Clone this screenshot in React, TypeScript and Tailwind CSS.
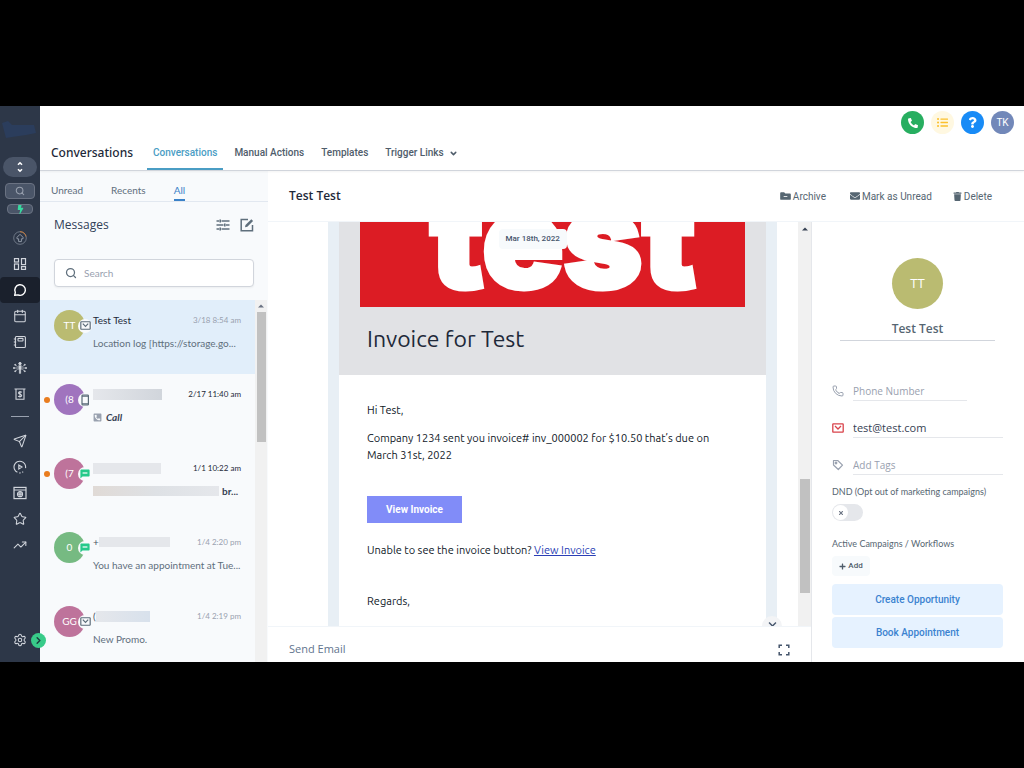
import React, { useState } from "react";
import { ChevronDown, Send, Star, TrendingUp, Settings, Calendar, Search, Phone } from "lucide-react";
import { FaBolt, FaEnvelope, FaListUl, FaPhoneAlt, FaPhoneSquareAlt, FaPlus, FaQuestion, FaTimes, FaTrash, FaChevronDown } from "react-icons/fa";

type IconProps = { className?: string };

const Mail = ({ className = "" }: IconProps) => (
    <svg className={className} viewBox="0 0 12 10" fill="none" stroke="currentColor" strokeWidth="1.3">
        <rect x="0.8" y="0.8" width="10.4" height="8.4" rx="0.5" />
        <path d="M3 3l3 3 3-3" />
    </svg>
);

const PhoneDevice = ({ className = "" }: IconProps) => (
    <svg className={className} viewBox="0 0 12 12" fill="none" stroke="currentColor" strokeWidth="1.2">
        <rect x="3" y="1" width="6.4" height="10" rx="0.8" />
        <path d="M3 2.2h6.4M3 9.8h6.4" />
    </svg>
);

const Sms = ({ className = "" }: IconProps) => (
    <svg className={className} viewBox="0 0 10 10" fill="currentColor">
        <path d="M1.200 0.500h7.600a.8.8 0 0 1 .8.8v5.400a.8.8 0 0 1-.8.8H2.500L0.400 9.500V1.300a.8.8 0 0 1 .8-.8z" />
        <path d="M2.600 4h4.800" stroke="white" strokeWidth="1.200" />
    </svg>
);

const Dashboard = ({ className = "" }: IconProps) => (
    <svg className={className} viewBox="0 0 14 14" fill="none" stroke="currentColor" strokeWidth="1.2">
        <rect x="1.5" y="1.6" width="4" height="3.4" />
        <rect x="1.5" y="7" width="4" height="5.4" />
        <rect x="8.5" y="1.6" width="4" height="6" />
        <rect x="8.5" y="9.6" width="4" height="2.8" />
    </svg>
);

const Chat = ({ className = "" }: IconProps) => (
    <svg className={className} viewBox="0 0 14 14" fill="none" stroke="currentColor" strokeWidth="1.4" strokeLinejoin="round">
        <path d="M1.7 12.3l.6-3A5.3 5.3 0 1 1 5 11.9z" />
    </svg>
);

const Notebook = ({ className = "" }: IconProps) => (
    <svg className={className} viewBox="0 0 14 14" fill="none" stroke="currentColor" strokeWidth="1.1">
        <rect x="2.4" y="1.5" width="10" height="11" rx="1" />
        <rect x="5" y="3.4" width="5" height="2.6" rx="0.6" />
        <path d="M0.8 4h2.4M0.8 7h2.4M0.8 10h2.4" />
    </svg>
);

const Network = ({ className = "" }: IconProps) => (
    <svg className={className} viewBox="0 0 14 14" fill="currentColor" stroke="currentColor">
        <circle cx="7" cy="2.6" r="1.2" />
        <path d="M5.6 4.6h2.8v4h-.6V12.500H6.200V8.600h-.6z" strokeWidth="0.3" />
        <path d="M5 7H1.500M9 7h3.500M4.600 5.600L2.400 4M9.400 5.600L11.600 4M4.600 8.400L2.400 10M9.400 8.400L11.600 10" strokeWidth="0.7" fill="none" />
        <circle cx="1" cy="7" r="0.6" />
        <circle cx="13" cy="7" r="0.6" />
        <circle cx="2.2" cy="3.800" r="0.5" />
        <circle cx="11.800" cy="3.800" r="0.5" />
        <circle cx="2.2" cy="10.200" r="0.5" />
        <circle cx="11.800" cy="10.200" r="0.5" />
    </svg>
);

const Payment = ({ className = "" }: IconProps) => (
    <svg className={className} viewBox="0 0 14 14" fill="none" stroke="currentColor" strokeWidth="1.1">
        <path d="M1.500 2h11M3 2v10.200h8V2" />
        <path d="M8.800 5.400C8.300 4.600 5.500 4.500 5.500 6S8.700 7 8.700 8.500 5.700 10 5.200 9M7 4v6.500" />
    </svg>
);

const Play = ({ className = "" }: IconProps) => (
    <svg className={className} viewBox="0 0 14 14" fill="none" stroke="currentColor" strokeWidth="1.1">
        <path d="M12.500 8.200A5.800 5.800 0 1 0 4.400 12.300" />
        <path d="M6.200 13l1.400-.1M9.200 12.400l1-.6" />
        <path d="M5.800 5v4l3.200-2z" />
    </svg>
);

const Browser = ({ className = "" }: IconProps) => (
    <svg className={className} viewBox="0 0 14 14" fill="none" stroke="currentColor" strokeWidth="1.2">
        <rect x="1" y="1.400" width="12" height="11.200" />
        <path d="M1 4h12M4.500 8.200h5M7 5.700v5" />
        <circle cx="7" cy="8.200" r="2.500" />
    </svg>
);

const Launch = ({ className = "" }: IconProps) => (
    <svg className={className} viewBox="0 0 14 14" fill="none" stroke="currentColor">
        <circle cx="7" cy="7" r="6.300" strokeWidth="0.6" />
        <path d="M7 0.700A6.300 6.300 0 0 1 13 5.500" stroke="#c77b3b" strokeWidth="1" />
        <path d="M7 3.300l3 3v1.500H8.400v2.800H5.600V7.800H4V6.300z" strokeWidth="0.9" />
    </svg>
);

const Sliders = ({ className = "" }: IconProps) => (
    <svg className={className} viewBox="0 0 14 12" fill="none" stroke="currentColor" strokeWidth="1.5">
        <path d="M0.500 2H3M5.500 2h8M0.500 6h7M10 6h3.500M0.500 10H3M5.500 10h8" />
        <path d="M4.200 0.500v3M8.800 4.500v3M4.200 8.500v3" strokeWidth="1.6" />
    </svg>
);

const Compose = ({ className = "" }: IconProps) => (
    <svg className={className} viewBox="0 0 14 14" fill="none" stroke="currentColor" strokeWidth="1.5">
        <path d="M8 1.500H1.200v11.300h11.300V7" />
        <path d="M5 9.200l.5-2.300L11.300 1.200l1.800 1.800-5.800 5.700z" fill="currentColor" stroke="none" />
    </svg>
);

const FolderMinus = ({ className = "" }: IconProps) => (
    <svg className={className} viewBox="0 0 12 10" fill="currentColor">
        <path d="M1.200 1H4.500l1.300 1.300h5a1 1 0 0 1 1 1V8.200a1 1 0 0 1-1 1H1.200a1 1 0 0 1-1-1V2a1 1 0 0 1 1-1z" />
        <rect x="4" y="5.200" width="4" height="0.900" fill="white" />
    </svg>
);

const Tag = ({ className = "" }: IconProps) => (
    <svg className={className} viewBox="0 0 12 12" fill="none" stroke="currentColor" strokeWidth="1.200" strokeLinejoin="round">
        <path d="M1.500 1.500h4.200l4.800 4.600-4.200 4.400L1.500 6z" />
        <circle cx="4" cy="4" r="0.800" />
    </svg>
);

const Expand = ({ className = "" }: IconProps) => (
    <svg className={className} viewBox="0 0 12 12" fill="none" stroke="currentColor" strokeWidth="1.500">
        <path d="M1.200 4V1.200H4M8 1.200h2.800V4M10.800 8v2.800H8M4 10.800H1.200V8" />
    </svg>
);

const UpArrow = ({ className = "" }: IconProps) => (
    <svg className={className} viewBox="0 0 6 4" fill="currentColor">
        <path d="M0 3.500L3 0.500l3 3z" />
    </svg>
);

const mainNav = [
    { name: "Launchpad", icon: <Launch className="size-[14px] text-gray-400" /> },
    { name: "Dashboard", icon: <Dashboard className="size-[14px]" /> },
    { name: "Conversations", icon: <Chat className="size-[14px]" /> },
    { name: "Calendars", icon: <Calendar size={14} strokeWidth={1.8} /> },
    { name: "Contacts", icon: <Notebook className="size-[14px]" /> },
    { name: "Opportunities", icon: <Network className="size-[14px]" /> },
    { name: "Payments", icon: <Payment className="size-[14px]" /> },
];

const secondNav = [
    { name: "Marketing", icon: <Send size={14} strokeWidth={1.8} /> },
    { name: "Automation", icon: <Play className="size-[14px]" /> },
    { name: "Sites", icon: <Browser className="size-[14px]" /> },
    { name: "Reputation", icon: <Star size={14} strokeWidth={1.8} /> },
    { name: "Reporting", icon: <TrendingUp size={14} strokeWidth={1.8} /> },
];

const mailBadge = <Mail className="h-[9px] w-[11px] text-[#5a6b78]" />;
const smsBadge = <Sms className="size-[10px] text-[#25c98a]" />;

const conversations = [
    {
        id: 1, initials: "TT", color: "bg-[#babb71]", badge: mailBadge, unread: false, time: "3/18 8:54 am",
        title: <span className="text-gray-800">Test Test</span>,
        preview: "Location log [https://storage.go...",
    },
    {
        id: 2, initials: "(8", color: "bg-[#a074be]", badge: <PhoneDevice className="size-3 text-[#5a6b78]" />, unread: true, time: "2/17 11:40 am",
        title: <span className="h-[11px] w-[69px] bg-linear-to-r from-gray-200 to-gray-300" />,
        preview: <span className="flex items-center gap-1 font-bold text-gray-700 italic"><FaPhoneSquareAlt size={9} className="text-gray-400" />Call</span>,
    },
    {
        id: 3, initials: "(7", color: "bg-[#be739b]", badge: smsBadge, unread: true, time: "1/1 10:22 am",
        title: <span className="h-[11px] w-[68px] bg-gray-200" />,
        preview: <span className="flex items-center gap-[3px] font-bold text-gray-700"><span className="h-[10px] w-[126px] bg-linear-to-r from-[#e0dad6] via-[#dee1e5] to-gray-200" />br...</span>,
    },
    {
        id: 4, initials: "0", color: "bg-[#76ba82]", badge: smsBadge, unread: false, time: "1/4 2:20 pm",
        title: <><span className="text-gray-600">+</span><span className="h-[10px] w-[71px] bg-gray-200" /></>,
        preview: "You have an appointment at Tue...",
    },
    {
        id: 5, initials: "GG", color: "bg-[#be739b]", badge: mailBadge, unread: false, time: "1/4 2:19 pm",
        title: <><span className="text-gray-600">(</span><span className="h-[11px] w-[54px] bg-linear-to-r from-gray-200 to-[#d8e1ec]" /></>,
        preview: "New Promo.",
    },
];

const Sidebar: React.FC = () => (
    <nav className="relative z-20 flex w-10 shrink-0 flex-col items-center bg-[#2d3748] text-gray-300">
        <svg className="mt-[13px] mb-[18px] h-5 w-9 text-[#2b3d5c]" viewBox="0 0 36 20" fill="currentColor">
            <path d="M0 4l6-2 4 4h22l2 8-10 2-14 2-6 1z" />
        </svg>
        <button aria-label="Switch account" className="flex h-5 w-[34px] items-center justify-center rounded-full bg-[#4a5568] text-white">
            <svg className="h-3 w-2" viewBox="0 0 8 12" fill="none" stroke="currentColor" strokeWidth="1.600">
                <path d="M2 3.800L4 1.800l2 2M2 8.200l2 2 2-2" />
            </svg>
        </button>
        <button aria-label="Search" className="mt-[6px] flex h-4 w-[30px] items-center justify-center rounded-sm border border-gray-500 bg-[#4a5568] text-gray-400">
            <Search size={10} strokeWidth={2.500} />
        </button>
        <button aria-label="Quick actions" className="mt-[5px] flex h-[10px] w-[26px] items-center justify-center rounded-sm border border-gray-500 bg-[#4a5568] text-[#38d9a0]">
            <FaBolt size={9} className="shrink-0" />
        </button>
        <ul className="mt-[11px] w-full">
            {mainNav.map((item) => (
                <li key={item.name}>
                    <a href="#" aria-label={item.name} className={item.name === "Conversations" ? "flex h-[26px] items-center justify-center rounded-sm bg-[#1a202c] text-white" : "flex h-[26px] items-center justify-center"}>
                        {item.icon}
                    </a>
                </li>
            ))}
        </ul>
        <hr className="mt-[9px] mb-[11px] w-[18px] border-gray-400" />
        <ul className="w-full">
            {secondNav.map((item) => (
                <li key={item.name}>
                    <a href="#" aria-label={item.name} className="flex h-[26px] items-center justify-center">{item.icon}</a>
                </li>
            ))}
        </ul>
        <a href="#" aria-label="Settings" className="mt-auto mb-[15px]"><Settings size={14} strokeWidth={1.800} /></a>
        <button aria-label="Expand menu" className="absolute -right-[6px] bottom-[14px] flex size-[15px] items-center justify-center rounded-full bg-[#38cb89] text-[#1b3a3c]">
            <ChevronDown size={11} strokeWidth={3} className="-rotate-90" />
        </button>
    </nav>
);

const Header: React.FC = () => (
    <header className="z-10 flex h-[65px] shrink-0 flex-col justify-between border-b border-gray-300 bg-white shadow-xs">
        <div className="flex justify-end gap-[7px] pt-[5px] pr-[10px]">
            <button aria-label="Call" className="flex size-[23px] items-center justify-center rounded-full bg-[#27ae60] text-white"><FaPhoneAlt size={10} /></button>
            <button aria-label="Tasks" className="flex size-[23px] items-center justify-center rounded-full bg-[#fff8e1] text-[#fbc02d]"><FaListUl size={11} /></button>
            <button aria-label="Help" className="flex size-[23px] items-center justify-center rounded-full bg-[#188bf6] text-white"><FaQuestion size={11} /></button>
            <button className="flex size-[23px] items-center justify-center rounded-full bg-[#7288b9] font-[Roboto] text-[10px] text-white">TK</button>
        </div>
        <div className="flex items-end pl-[11px] font-[Roboto] text-[10px] font-medium text-[#4f5d6b]">
            <h1 className="mr-[14px] pb-[7px] font-['Noto_Sans'] text-[12px] leading-5 font-medium text-gray-800">Conversations</h1>
            <a href="#" className="mr-[5px] border-b-2 border-[#4a9dc4] px-[6px] pb-[7px] leading-4 text-[#4a9dc4]">Conversations</a>
            <a href="#" className="mr-[5px] border-b-2 border-transparent px-[6px] pb-[7px] leading-4">Manual Actions</a>
            <a href="#" className="mr-[5px] border-b-2 border-transparent px-[6px] pb-[7px] leading-4">Templates</a>
            <button className="flex items-center gap-[5px] border-b-2 border-transparent px-[6px] pb-[7px] leading-4">Trigger Links<ChevronDown size={9} strokeWidth={4} /></button>
        </div>
    </header>
);

const MessageList: React.FC<{ selected: number; onSelect: (id: number) => void }> = ({ selected, onSelect }) => (
    <section className="flex w-[228px] shrink-0 flex-col bg-[#f8fafc] font-[Lato,sans-serif] text-[#5f6f7c]">
        <div className="flex h-[31px] shrink-0 items-end gap-[28px] border-b border-slate-200 pl-[11px] text-[10px] leading-4">
            <button className="pb-[3px]">Unread</button>
            <button className="pb-[3px]">Recents</button>
            <button className="border-b-2 border-[#3b82c8] pb-px text-[#3b82c8]">All</button>
        </div>
        <div className="flex items-center justify-between pt-[13px] pr-[14px] pl-[14px]">
            <h2 className="font-['Open_Sans'] text-[12px] leading-5 text-slate-700">Messages</h2>
            <div className="flex gap-[10px]">
                <button aria-label="Filters"><Sliders className="h-3 w-[14px]" /></button>
                <button aria-label="New message"><Compose className="size-[14px]" /></button>
            </div>
        </div>
        <label className="mx-[14px] mt-6 flex h-7 shrink-0 items-center gap-[7px] rounded-sm border border-gray-300 bg-white px-[10px] shadow-xs">
            <Search size={12} strokeWidth={2.500} className="shrink-0" />
            <input placeholder="Search" className="w-full min-w-0 text-[10px] outline-none placeholder:text-gray-400" />
        </label>
        <div className="mt-[13px] flex min-h-0 flex-1">
            <ul className="min-w-0 flex-1 overflow-hidden">
                {conversations.map((c) => (
                    <li key={c.id}>
                        <button
                            onClick={() => onSelect(c.id)}
                            className={c.id === selected ? "flex h-[74px] w-full bg-[#e1eefa] pt-[10px] pr-[14px] text-left" : "flex h-[74px] w-full pt-[10px] pr-[14px] text-left"}
                        >
                            <span className="flex h-8 w-[14px] shrink-0 items-center justify-center">
                                {c.unread && <span className="size-[6px] rounded-full bg-[#e97d1f]" />}
                            </span>
                            <span className={`relative flex size-[31px] shrink-0 items-center justify-center rounded-full text-[10px] text-white ${c.color}`}>
                                {c.initials}
                                <span className="absolute -right-[7px] flex size-[14px] items-center justify-center rounded-full bg-[#f8fafc]">{c.badge}</span>
                            </span>
                            <span className="ml-2 min-w-0 flex-1">
                                <span className="flex h-5 items-center justify-between">
                                    <span className="flex items-center text-[10px]">{c.title}</span>
                                    <span className={c.unread ? "text-[8px] text-gray-800" : "text-[8px] text-gray-400"}>{c.time}</span>
                                </span>
                                <span className="mt-[3px] block text-[10px] leading-5 whitespace-nowrap">{c.preview}</span>
                            </span>
                        </button>
                    </li>
                ))}
            </ul>
            <div className="mr-px flex w-3 shrink-0 flex-col items-center bg-[#f1f1f1]">
                <UpArrow className="my-1 h-1 w-[6px] text-gray-500" />
                <div className="h-[36%] w-[9px] bg-[#c1c1c1]" />
            </div>
        </div>
    </section>
);

const Email: React.FC = () => (
    <article className="mr-[21px] ml-[60px] min-w-0 flex-1 overflow-hidden border-x-[11px] border-[#e8eff5] bg-white font-[Ubuntu,'Noto_Sans',sans-serif] text-[11px] text-gray-900">
        <div className="bg-[#e1e2e5] px-[21px] pb-[19px]">
            <svg className="h-[85px] w-full bg-[#dc1c24]" viewBox="0 0 385 85" role="img" aria-label="test">
                <text x="203" y="66" textAnchor="middle" fontFamily="Inter, sans-serif" fontSize="134" fontWeight="900" fill="white" stroke="white" strokeWidth="5">test</text>
            </svg>
            <h2 className="mt-[15px] pl-[7px] text-[23px] leading-[34px] text-gray-800">Invoice for Test</h2>
        </div>
        <div className="px-7 pt-[27px] leading-[17px]">
            <p>Hi Test,</p>
            <p className="mt-[11px]">Company 1234 sent you invoice# inv_000002 for $10.50 that’s due on March 31st, 2022</p>
            <button className="mt-8 h-[27px] w-[95px] bg-[#818cf8] font-[Roboto] text-[10px] font-bold text-white">View Invoice</button>
            <p className="mt-[19px]">Unable to see the invoice button? <a href="#" className="text-[#2b3fb5] underline">View Invoice</a></p>
            <p className="mt-[34px]">Regards,</p>
        </div>
    </article>
);

const Thread: React.FC = () => (
    <section className="flex min-w-0 flex-1 flex-col">
        <div className="relative flex min-h-0 flex-1 overflow-hidden">
            <Email />
            <div className="flex w-[13px] shrink-0 flex-col items-center bg-[#f1f1f1]">
                <UpArrow className="mt-[5px] h-1 w-[6px] text-gray-700" />
                <div className="h-[61.500%]" />
                <div className="h-[28%] w-[10px] bg-[#c1c1c1]" />
            </div>
            <span className="absolute top-[7px] left-1/2 -translate-x-[41px] rounded-sm bg-[#f7fafc] px-[7px] font-[Roboto] text-[8px] leading-5 font-medium text-slate-600">Mar 18th, 2022</span>
            <button aria-label="Scroll to bottom" className="absolute right-[29px] -bottom-[10px] flex size-5 items-start justify-center rounded-full bg-gray-100 pt-1 text-slate-600">
                <FaChevronDown size={9} />
            </button>
        </div>
        <div className="flex h-9 shrink-0 items-center justify-between border-t border-slate-100 pt-[10px] pr-[21px] pl-[21px] text-[11px] text-slate-500">
            <button>Send Email</button>
            <button aria-label="Expand editor" className="text-slate-600"><Expand className="size-3" /></button>
        </div>
    </section>
);

const ContactPanel: React.FC = () => {
    const [dnd, setDnd] = useState(false);

    return (
        <aside className="flex w-[213px] shrink-0 flex-col border-l border-gray-200 pr-[21px] pl-5 text-[10px]">
            <div className="mx-2 flex flex-col items-center border-b border-gray-300 pt-9 pb-px">
                <div className="flex size-[51px] items-center justify-center rounded-full bg-[#babb71] text-[13px] text-white">TT</div>
                <h3 className="mt-[10px] text-[12px] leading-5 font-semibold text-[#566672]">Test Test</h3>
            </div>
            <label className="mt-10 flex h-5 items-center gap-[9px] text-gray-400">
                <Phone size={12} className="shrink-0" />
                <input aria-label="Phone number" placeholder="Phone Number" className="mr-9 h-5 w-full min-w-0 border-b border-gray-200 outline-none placeholder:text-gray-400" />
            </label>
            <label className="mt-[17px] flex h-5 items-center gap-[9px] text-[#d9434b]">
                <Mail className="h-[10px] w-3 shrink-0" />
                <input aria-label="Email" defaultValue="test@test.com" className="h-5 w-full min-w-0 border-b border-gray-200 text-[11px] text-gray-700 outline-none" />
            </label>
            <label className="mt-[17px] flex h-5 items-center gap-[9px] text-gray-400">
                <Tag className="size-3 shrink-0" />
                <input aria-label="Tags" placeholder="Add Tags" className="h-5 w-full min-w-0 border-b border-gray-200 outline-none placeholder:text-gray-400" />
            </label>
            <label htmlFor="dnd" className="mt-[9px] font-[Lato] text-[9px] leading-4 whitespace-nowrap text-[#566672]">DND (Opt out of marketing campaigns)</label>
            <div className="relative mt-1 h-[17px] w-[31px]">
                <input id="dnd" type="checkbox" checked={dnd} onChange={() => setDnd(!dnd)} className="block h-full w-full appearance-none rounded-full bg-gray-200 checked:bg-blue-500" />
                <span className="pointer-events-none absolute top-px left-px flex size-[15px] items-center justify-center rounded-full bg-white text-gray-500"><FaTimes size={6} /></span>
            </div>
            <p className="mt-[15px] font-[Lato] text-[9px] leading-4 text-[#566672]">Active Campaigns / Workflows</p>
            <button className="mt-1 flex h-5 w-[38px] items-center justify-center gap-[2px] rounded-sm bg-[#f7fafc] font-[Roboto] text-[8px] font-medium text-[#4f5d6b]"><FaPlus size={7} />Add</button>
            <button className="mt-2 h-[31px] shrink-0 rounded-sm bg-[#e6f2ff] font-[Roboto] font-medium text-[#3b82d0]">Create Opportunity</button>
            <button className="mt-[2px] h-[31px] shrink-0 rounded-sm bg-[#e6f2ff] font-[Roboto] font-medium text-[#3b82d0]">Book Appointment</button>
        </aside>
    );
};

const App: React.FC = () => {
    const [selected, setSelected] = useState(1);

    return (
        <div className="h-screen bg-black py-[106px] font-['Open_Sans','Noto_Sans',sans-serif]">
            <div className="flex h-full overflow-hidden bg-white">
                <Sidebar />
                <div className="flex min-w-0 flex-1 flex-col">
                    <Header />
                    <div className="flex min-h-0 flex-1">
                        <MessageList selected={selected} onSelect={setSelected} />
                        <main className="flex min-w-0 flex-1 flex-col">
                            <div className="flex h-[51px] shrink-0 items-center border-b border-slate-100 pr-8 pl-[21px] font-[Roboto] text-[10px] text-[#566672]">
                                <h2 className="mr-auto font-['Open_Sans'] text-[12px] font-semibold text-gray-800">Test Test</h2>
                                <button className="mr-6 flex items-center gap-[2px]"><FolderMinus className="h-[10px] w-[11px]" />Archive</button>
                                <button className="mr-[21px] flex items-center gap-[2px]"><FaEnvelope size={10} />Mark as Unread</button>
                                <button className="flex items-center gap-[2px]"><FaTrash size={9} />Delete</button>
                            </div>
                            <div className="flex min-h-0 flex-1">
                                <Thread />
                                <ContactPanel />
                            </div>
                        </main>
                    </div>
                </div>
            </div>
        </div>
    );
};

export default App;
